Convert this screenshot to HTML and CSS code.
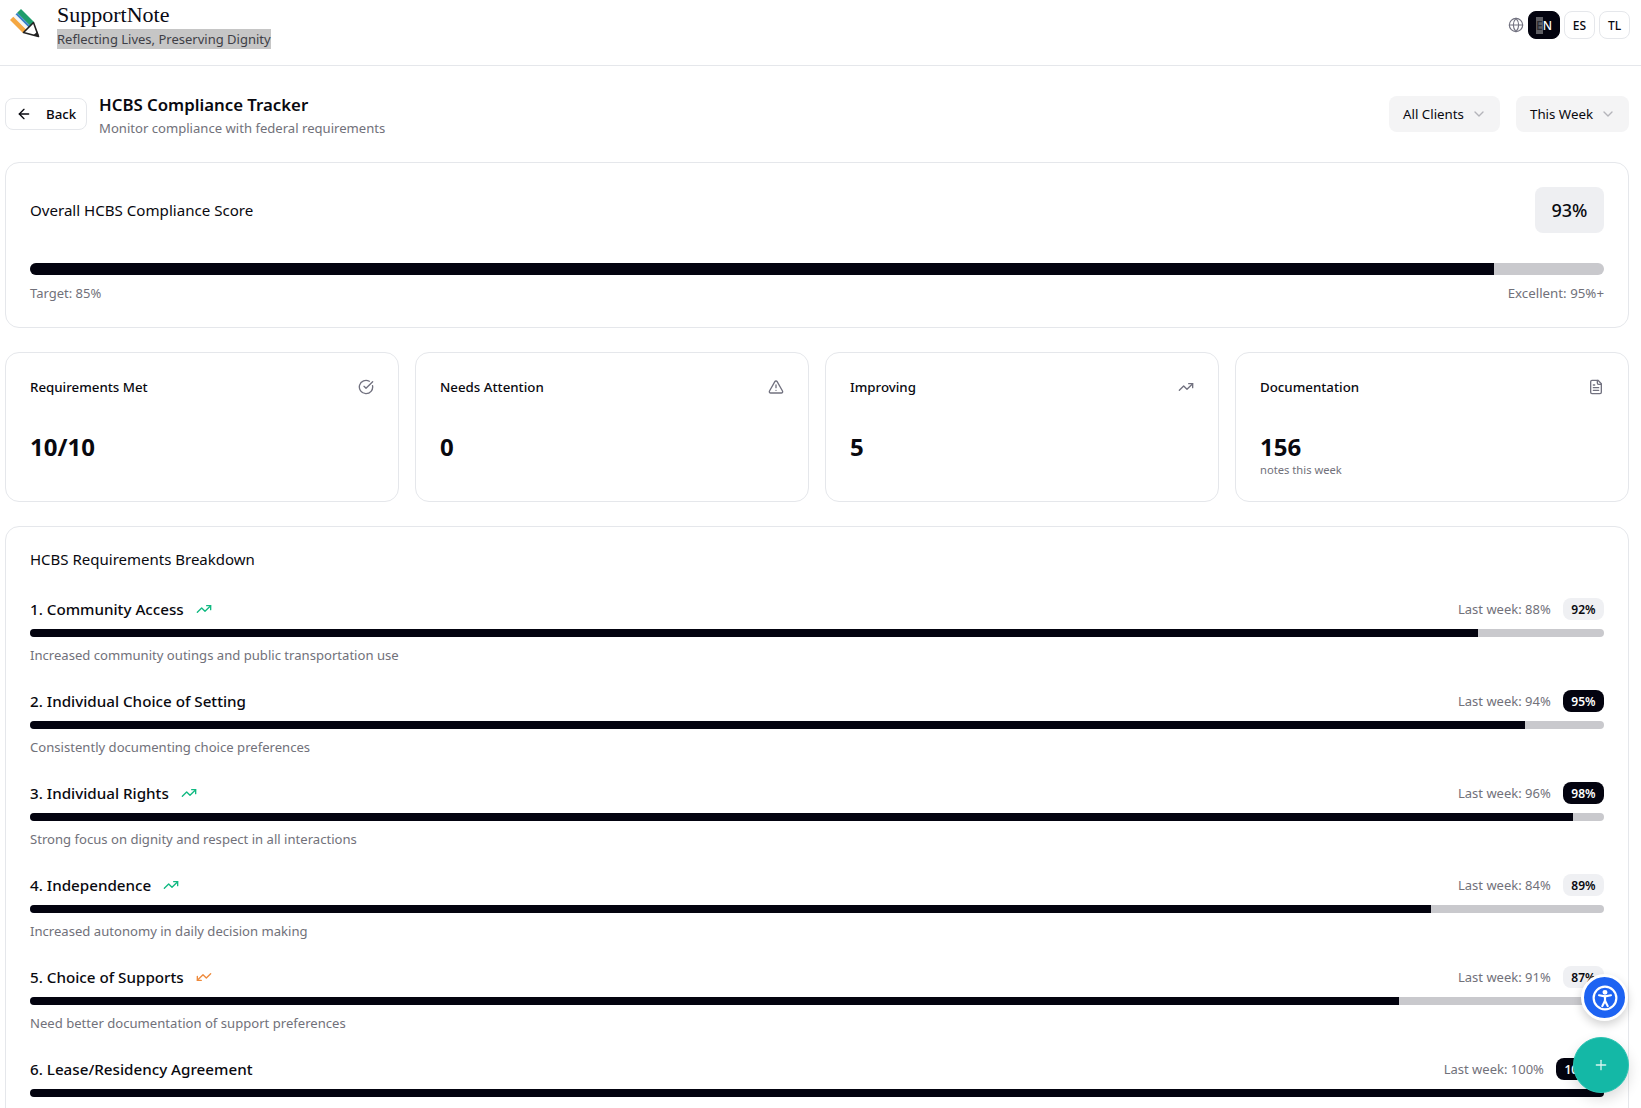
FILE: index.html
```html
<!DOCTYPE html>
<html lang="en">
<head>
<meta charset="utf-8">
<title>HCBS Compliance Tracker</title>
<link rel="stylesheet" href="styles.css">
</head>
<body>
<header class="topbar">
  <div class="brand">
    <svg class="logo" viewBox="0 0 32 32" width="32" height="32">
      <path d="M12 1 8.150 4.850 21.150 17.850 25 14z" fill="#1f9d6b"/>
      <path d="M8.150 4.850 6.500 6.500 19.500 19.500 21.150 17.850z" fill="#3b82c6"/>
      <path d="M6.500 6.500 4.300 8.700 17.300 21.700 19.500 19.500z" fill="#f3f5f6"/>
      <path d="M4.300 8.700 1 12 14 25 17.300 21.700z" fill="#f4a742"/>
      <path d="M14.500 24.500 24.500 14.500 29.500 28.500z" fill="#fff" stroke="#222" stroke-width="1.600" stroke-linejoin="round"/>
      <path d="M24.500 27 30 29 28.500 23.500z" fill="#222"/>
    </svg>
    <div class="brand-text">
      <div class="brand-name">SupportNote</div>
      <div class="brand-tag"><span class="selected">Reflecting Lives, Preserving Dignity</span></div>
    </div>
  </div>
  <div class="langs">
    <svg class="icon globe" viewBox="0 0 24 24"><circle cx="12" cy="12" r="10"/><path d="M12 2a14.500 14.500 0 0 0 0 20 14.500 14.500 0 0 0 0-20"/><path d="M2 12h20"/></svg>
    <button class="lang lang-on"><span class="selected-dark">E</span>N</button>
    <button class="lang">ES</button>
    <button class="lang">TL</button>
  </div>
</header>

<main class="page">
  <section class="head">
    <button class="back">
      <svg class="icon back-arrow" viewBox="0 0 24 24"><path d="m12 19-7-7 7-7"/><path d="M19 12H5"/></svg>
      <span>Back</span>
    </button>
    <div class="head-text">
      <h1>HCBS Compliance Tracker</h1>
      <p>Monitor compliance with federal requirements</p>
    </div>
    <div class="filters">
      <div class="select select-clients">All Clients<svg class="icon chev" viewBox="0 0 24 24"><path d="m6 9 6 6 6-6"/></svg></div>
      <div class="select select-week">This Week<svg class="icon chev" viewBox="0 0 24 24"><path d="m6 9 6 6 6-6"/></svg></div>
    </div>
  </section>

  <section class="card overall">
    <div class="overall-top">
      <h2>Overall HCBS Compliance Score</h2>
      <div class="score">93%</div>
    </div>
    <div class="bar bar-lg"><div class="fill" style="width:93%"></div></div>
    <div class="overall-foot"><span>Target: 85%</span><span class="foot-right">Excellent: 95%+</span></div>
  </section>

  <section class="stats">
    <div class="card stat">
      <div class="stat-top"><span>Requirements Met</span><svg class="icon stat-icon" viewBox="0 0 24 24"><path d="M21.800 10A10 10 0 1 1 17 3.340"/><path d="m9 11 3 3L22 4"/></svg></div>
      <div class="stat-value">10/10</div>
    </div>
    <div class="card stat">
      <div class="stat-top"><span>Needs Attention</span><svg class="icon stat-icon" viewBox="0 0 24 24"><path d="m21.730 18-8-14a2 2 0 0 0-3.480 0l-8 14A2 2 0 0 0 4 21h16a2 2 0 0 0 1.730-3"/><path d="M12 9v4"/><path d="M12 17h.01"/></svg></div>
      <div class="stat-value">0</div>
    </div>
    <div class="card stat">
      <div class="stat-top"><span>Improving</span><svg class="icon stat-icon" viewBox="0 0 24 24"><path d="M22 7 13.500 15.500 8.500 10.500 2 17"/><path d="M16 7h6v6"/></svg></div>
      <div class="stat-value">5</div>
    </div>
    <div class="card stat">
      <div class="stat-top"><span>Documentation</span><svg class="icon stat-icon" viewBox="0 0 24 24"><path d="M15 2H6a2 2 0 0 0-2 2v16a2 2 0 0 0 2 2h12a2 2 0 0 0 2-2V7Z"/><path d="M14 2v4a2 2 0 0 0 2 2h4"/><path d="M16 13H8"/><path d="M16 17H8"/><path d="M10 9H8"/></svg></div>
      <div class="stat-value">156</div>
      <div class="stat-note">notes this week</div>
    </div>
  </section>

  <section class="card breakdown">
    <h2>HCBS Requirements Breakdown</h2>
    <div class="req">
      <div class="req-top">
        <div class="req-name">1. Community Access<svg class="icon trend up" viewBox="0 0 24 24"><path d="M22 7 13.500 15.500 8.500 10.500 2 17"/><path d="M16 7h6v6"/></svg></div>
        <div class="req-meta"><span>Last week: 88%</span><b class="pct">92%</b></div>
      </div>
      <div class="bar"><div class="fill" style="width:92%"></div></div>
      <p>Increased community outings and public transportation use</p>
    </div>
    <div class="req">
      <div class="req-top">
        <div class="req-name">2. Individual Choice of Setting</div>
        <div class="req-meta"><span>Last week: 94%</span><b class="pct pct-dark">95%</b></div>
      </div>
      <div class="bar"><div class="fill" style="width:95%"></div></div>
      <p>Consistently documenting choice preferences</p>
    </div>
    <div class="req">
      <div class="req-top">
        <div class="req-name">3. Individual Rights<svg class="icon trend up" viewBox="0 0 24 24"><path d="M22 7 13.500 15.500 8.500 10.500 2 17"/><path d="M16 7h6v6"/></svg></div>
        <div class="req-meta"><span>Last week: 96%</span><b class="pct pct-dark">98%</b></div>
      </div>
      <div class="bar"><div class="fill" style="width:98%"></div></div>
      <p>Strong focus on dignity and respect in all interactions</p>
    </div>
    <div class="req">
      <div class="req-top">
        <div class="req-name">4. Independence<svg class="icon trend up" viewBox="0 0 24 24"><path d="M22 7 13.500 15.500 8.500 10.500 2 17"/><path d="M16 7h6v6"/></svg></div>
        <div class="req-meta"><span>Last week: 84%</span><b class="pct">89%</b></div>
      </div>
      <div class="bar"><div class="fill" style="width:89%"></div></div>
      <p>Increased autonomy in daily decision making</p>
    </div>
    <div class="req">
      <div class="req-top">
        <div class="req-name">5. Choice of Supports<svg class="icon trend down" viewBox="0 0 24 24"><path d="M2 17 10.500 8.500 15.500 13.500 22 7"/><path d="M8 17H2v-6"/></svg></div>
        <div class="req-meta"><span>Last week: 91%</span><b class="pct">87%</b></div>
      </div>
      <div class="bar"><div class="fill" style="width:87%"></div></div>
      <p>Need better documentation of support preferences</p>
    </div>
    <div class="req">
      <div class="req-top">
        <div class="req-name">6. Lease/Residency Agreement</div>
        <div class="req-meta"><span>Last week: 100%</span><b class="pct pct-dark">100%</b></div>
      </div>
      <div class="bar"><div class="fill" style="width:100%"></div></div>
    </div>
  </section>
</main>

<button class="fab-a11y" aria-label="Accessibility">
  <svg viewBox="0 0 24 24" width="26" height="26" fill="none" stroke="#fff" stroke-width="2" stroke-linecap="round" stroke-linejoin="round"><circle cx="12" cy="12" r="10.500"/><circle cx="12" cy="6.800" r="1.300" fill="#fff"/><path d="M6.500 9.500 12 10.500 17.500 9.500"/><path d="M12 10.500v4"/><path d="m12 14.500-2.500 5"/><path d="m12 14.500 2.500 5"/></svg>
</button>
<button class="fab-add" aria-label="Add">
  <svg viewBox="0 0 24 24" width="16" height="16" fill="none" stroke="#d9f5f0" stroke-width="2" stroke-linecap="round"><path d="M5 12h14"/><path d="M12 5v14"/></svg>
</button>
</body>
</html>
```
FILE: styles.css
```css
* { box-sizing: border-box; }
html, body { margin: 0; height: 1108px; overflow: hidden; }
body {
  background: #fff;
  color: #09090f;
  font-family: "Noto Sans", "Open Sans", sans-serif;
  font-size: 14px;
  position: relative;
}
h1, h2, p { margin: 0; font-weight: 400; }
button { font-family: inherit; color: inherit; background: none; }

.icon { fill: none; stroke: currentColor; stroke-width: 2; stroke-linecap: round; stroke-linejoin: round; flex: none; }

.topbar {
  height: 66px;
  border-bottom: 1px solid #e5e7eb;
  display: flex;
  justify-content: space-between;
  padding: 0 11px 0 9px;
}
.brand { display: flex; gap: 16px; align-items: flex-start; padding-top: 7px; }
.logo { flex: none; margin-top: 1px; }
.brand-text { margin-top: -3px; }
.brand-name { font-family: "Liberation Serif", serif; font-size: 22px; line-height: 22px; color: #0a0a14; }
.brand-tag { font-size: 13px; line-height: 20px; margin-top: 3px; color: #3f3f46; }
.selected { background: #c6c6c6; display: inline-block; }

.langs { display: flex; align-items: center; gap: 4px; height: 50px; }
.globe { width: 16px; height: 16px; color: #71717f; stroke-width: 1.700; }
.lang {
  height: 28px;
  width: 31px;
  padding: 0;
  border: 1px solid #e5e7eb;
  border-radius: 8px;
  font-size: 12px;
  font-weight: 500;
}
.lang-on { background: #03030f; color: #fff; border-color: #03030f; width: 32px; }
.selected-dark { background: #5e5e64; color: #2a2a30; display: inline-block; line-height: 17px; }

.page { padding: 32px 12px 0 5px; }

.head { display: flex; align-items: flex-start; height: 64px; }
.back {
  display: flex; align-items: center;
  width: 82px; height: 32px;
  border: 1px solid #e5e7eb;
  border-radius: 8px;
  padding: 0 0 0 10px;
  font-size: 13.300px; font-weight: 500;
}
.back-arrow { width: 16px; height: 16px; margin-right: 14px; }
.head-text { margin-left: 12px; margin-top: -6px; }
.head-text h1 { font-size: 16.800px; line-height: 26px; font-weight: 600; }
.head-text p { font-size: 13.100px; line-height: 20px; color: #71717a; }
.filters { margin-left: auto; display: flex; gap: 16px; margin-top: -2px; }
.select {
  height: 36px; border-radius: 8px; background: #f4f4f5;
  display: flex; align-items: center; justify-content: space-between;
  padding: 0 13px 0 14px; font-size: 13.300px;
}
.select-clients { width: 111px; }
.select-week { width: 113px; }
.chev { width: 16px; height: 16px; color: #b4b4ba; }

.card { border: 1px solid #e5e7eb; border-radius: 14px; background: #fff; }

.overall { height: 166px; padding: 24px 24px 0; }
.overall-top { display: flex; justify-content: space-between; align-items: center; }
.overall h2 { font-size: 15.100px; }
.score {
  width: 69px; height: 46px; border-radius: 8px; background: #eeeff2;
  display: flex; align-items: center; justify-content: center;
  font-size: 18px; font-weight: 500;
}
.bar { height: 8px; border-radius: 8px; background: #c9c9cd; overflow: hidden; }
.bar-lg { height: 12px; margin-top: 30px; }
.fill { height: 100%; background: #03030f; }
.overall-foot { display: flex; justify-content: space-between; margin-top: 8px; font-size: 13px; line-height: 20px; color: #71717a; }
.foot-right { font-size: 13.300px; }

.stats { display: grid; grid-template-columns: repeat(4, 1fr); gap: 16px; margin-top: 24px; }
.stat { height: 150px; padding: 24px 24px 0; }
.stat-top { display: flex; justify-content: space-between; align-items: center; font-size: 13.300px; font-weight: 500; line-height: 20px; }
.stat-icon { width: 16px; height: 16px; color: #71717f; }
.stat-value { font-size: 24px; font-weight: 700; line-height: 32px; margin-top: 34px; }
.stat-note { font-size: 11.200px; line-height: 16px; color: #71717a; margin-top: -1px; }

.breakdown { margin-top: 24px; padding: 20px 24px 0; height: 700px; }
.breakdown h2 { font-size: 15px; line-height: 24px; margin-bottom: 26px; }
.req { height: 92px; }
.req-top { display: flex; justify-content: space-between; align-items: center; height: 24px; margin-bottom: 8px; }
.req-name { display: flex; align-items: center; font-size: 15.200px; font-weight: 500; }
.trend { width: 16px; height: 16px; margin-left: 12px; }
.up { color: #10b981; }
.down { color: #ee8a3c; }
.req-meta { display: flex; align-items: center; gap: 12px; font-size: 13px; color: #71717a; }
.pct {
  height: 22px; padding: 0 8.500px; border-radius: 8px; background: #eff0f3; color: #09090f;
  display: flex; align-items: center; font-size: 12px; font-weight: 600;
}
.pct-dark { background: #03030f; color: #fff; }
.req p { font-size: 13.100px; line-height: 20px; color: #71717a; margin-top: 8px; }

.fab-a11y, .fab-add { position: absolute; padding: 0; display: flex; align-items: center; justify-content: center; border-radius: 50%; }
.fab-a11y {
  left: 1581px; top: 974px; width: 47px; height: 47px;
  background: #1d63f2; border: 3px solid #fff;
  box-shadow: 0 4px 10px rgba(0,0,0,.18);
}
.fab-add {
  left: 1573px; top: 1037px; width: 56px; height: 56px;
  background: #14b8a6; border: 1px solid #2cc4b3;
  box-shadow: 0 6px 14px rgba(0,0,0,.14);
}
```
